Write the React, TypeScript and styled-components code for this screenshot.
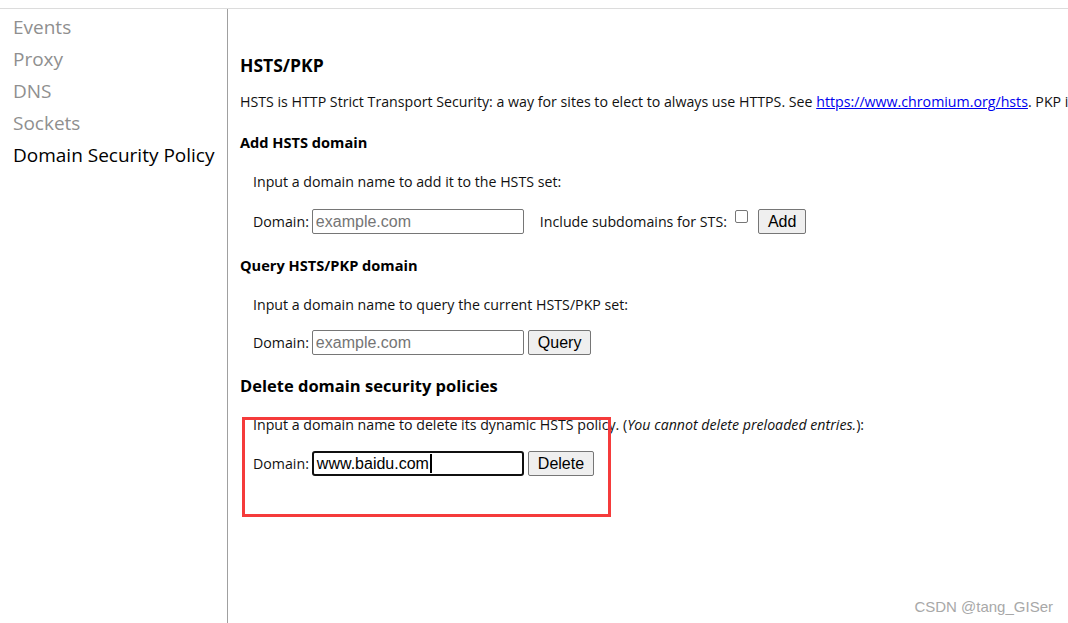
import React from "react";
import styled, { createGlobalStyle } from "styled-components";

const GlobalStyle = createGlobalStyle`
  html, body {
    margin: 0;
    padding: 0;
    background: #fff;
    overflow: hidden;
  }
  body {
    font-family: "Open Sans", "Noto Sans", sans-serif;
    color: #000;
  }
`;

const Page = styled.div`
  position: relative;
  width: 1068px;
  height: 623px;
  overflow: hidden;
  display: flex;
  flex-direction: column;
`;

const TopGap = styled.div`
  height: 8px;
  border-bottom: 1px solid #dcdcdc;
  flex: none;
`;

const Body = styled.div`
  display: flex;
  flex: 1;
  min-height: 0;
`;

const Sidebar = styled.nav`
  width: 228px;
  flex: none;
  border-right: 1px solid #a0a0a0;
  padding-top: 2px;
  box-sizing: border-box;
`;

const NavItem = styled.div<{ $active?: boolean }>`
  padding-left: 13px;
  font-size: 19px;
  line-height: 32px;
  height: 32px;
  color: ${(p) => (p.$active ? "#000" : "#8f8f8f")};
  white-space: nowrap;
`;

const Main = styled.main`
  flex: 1;
  padding: 44px 0 0 12px;
  white-space: nowrap;
  overflow: hidden;
`;

const Title = styled.h2<{ $top?: number; $size?: number }>`
  margin: ${(p) => p.$top ?? 0}px 0 0;
  font-size: ${(p) => p.$size ?? 16.5}px;
  font-weight: 700;
  line-height: 24px;
  height: 24px;
`;

const SubTitle = styled.h3<{ $top: number }>`
  margin: ${(p) => p.$top}px 0 0;
  font-size: 14.6px;
  font-weight: 700;
  line-height: 20px;
  height: 20px;
`;

const Text = styled.p<{ $top: number; $indent?: boolean }>`
  margin: ${(p) => p.$top}px 0 0;
  padding-left: ${(p) => (p.$indent ? 13 : 0)}px;
  font-size: 14.2px;
  line-height: 20px;
  height: 20px;
  color: #111;
`;

const Link = styled.a`
  color: #0000ee;
  text-decoration: underline;
`;

const Row = styled.div<{ $top: number }>`
  margin-top: ${(p) => p.$top}px;
  padding-left: 13px;
  display: flex;
  align-items: center;
  height: 25px;
  font-size: 14.2px;
  color: #111;
`;

const Label = styled.span`
  margin-right: 3px;
`;

const DomainInput = styled.input`
  box-sizing: border-box;
  width: 212px;
  height: 25px;
  padding: 1px 3px;
  font-family: "Liberation Sans", Arial, sans-serif;
  font-size: 16px;
  color: #000;
  border: 1px solid #767676;
  border-radius: 2px;
  outline: none;
  &::placeholder {
    color: #757575;
  }
`;

/* the focused field from the screenshot, drawn with its text caret */
const FocusedField = styled.div`
  box-sizing: border-box;
  width: 212px;
  height: 25px;
  padding: 0 3px;
  display: flex;
  align-items: center;
  font-family: "Liberation Sans", Arial, sans-serif;
  font-size: 16px;
  color: #000;
  border: 2px solid #101010;
  border-radius: 3px;
`;

const Caret = styled.span`
  display: inline-block;
  width: 2px;
  height: 19px;
  margin-left: 1px;
  background: #000;
`;

const Button = styled.button<{ $gap?: number }>`
  box-sizing: border-box;
  height: 25px;
  margin-left: ${(p) => p.$gap ?? 4}px;
  padding: 0 9px;
  font-family: "Liberation Sans", Arial, sans-serif;
  font-size: 16px;
  color: #000;
  background: #efefef;
  border: 1px solid #767676;
  border-radius: 2px;
`;

const CheckLabel = styled.span`
  margin-left: 16px;
  margin-right: 8px;
`;

const CheckBox = styled.span`
  display: inline-block;
  width: 13px;
  height: 13px;
  box-sizing: border-box;
  border: 1px solid #767676;
  border-radius: 2px;
  background: #fff;
  align-self: flex-start;
  margin-top: 1px;
  margin-right: 10px;
`;

const Annotation = styled.div`
  position: absolute;
  left: 242px;
  top: 417px;
  width: 369px;
  height: 100px;
  box-sizing: border-box;
  border: 3px solid #f53b3b;
  pointer-events: none;
`;

const Watermark = styled.div`
  position: absolute;
  right: 15px;
  bottom: 8px;
  font-family: "Liberation Sans", Arial, sans-serif;
  font-size: 15px;
  color: #a8a8a8;
`;

const navItems = ["Events", "Proxy", "DNS", "Sockets", "Domain Security Policy"];

export default function App() {
  return (
    <>
      <GlobalStyle />
      <Page>
        <TopGap />
        <Body>
          <Sidebar>
            {navItems.map((n) => (
              <NavItem key={n} $active={n === "Domain Security Policy"}>
                {n}
              </NavItem>
            ))}
          </Sidebar>
          <Main>
            <Title $size={17.5}>HSTS/PKP</Title>
            <Text $top={15}>
              HSTS is HTTP Strict Transport Security: a way for sites to elect to always use HTTPS. See{" "}
              <Link href="#">https://www.chromium.org/hsts</Link>. PKP i
            </Text>
            <SubTitle $top={20}>Add HSTS domain</SubTitle>
            <Text $top={20} $indent>
              Input a domain name to add it to the HSTS set:
            </Text>
            <Row $top={17}>
              <Label>Domain:</Label>
              <DomainInput placeholder="example.com" readOnly />
              <CheckLabel>Include subdomains for STS:</CheckLabel>
              <CheckBox />
              <Button $gap={0}>Add</Button>
            </Row>
            <SubTitle $top={21}>Query HSTS/PKP domain</SubTitle>
            <Text $top={20} $indent>
              Input a domain name to query the current HSTS/PKP set:
            </Text>
            <Row $top={15}>
              <Label>Domain:</Label>
              <DomainInput placeholder="example.com" readOnly />
              <Button>Query</Button>
            </Row>
            <Title $top={19}>Delete domain security policies</Title>
            <Text $top={17} $indent>
              Input a domain name to delete its dynamic HSTS policy. (<i>You cannot delete preloaded entries.</i>):
            </Text>
            <Row $top={16}>
              <Label>Domain:</Label>
              <FocusedField>
                www.baidu.com
                <Caret />
              </FocusedField>
              <Button>Delete</Button>
            </Row>
          </Main>
        </Body>
        <Annotation />
        <Watermark>CSDN @tang_GISer</Watermark>
      </Page>
    </>
  );
}
